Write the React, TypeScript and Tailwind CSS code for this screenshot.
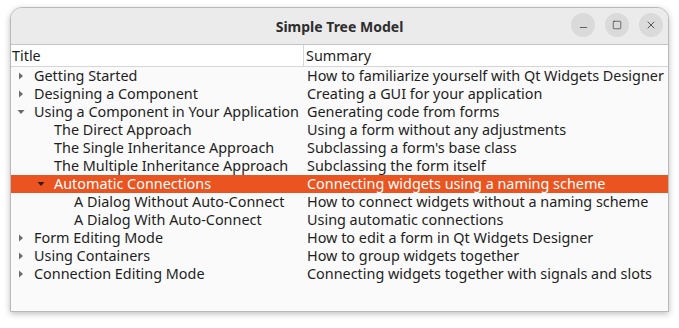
import { Minus, Square, X } from "lucide-react";

interface Row {
    title: string;
    summary: string;
    level: number;
    arrow: "none" | "closed" | "open";
    selected?: boolean;
}

const rows: Row[] = [
    { title: "Getting Started", summary: "How to familiarize yourself with Qt Widgets Designer", level: 0, arrow: "closed" },
    { title: "Designing a Component", summary: "Creating a GUI for your application", level: 0, arrow: "closed" },
    { title: "Using a Component in Your Application", summary: "Generating code from forms", level: 0, arrow: "open" },
    { title: "The Direct Approach", summary: "Using a form without any adjustments", level: 1, arrow: "none" },
    { title: "The Single Inheritance Approach", summary: "Subclassing a form's base class", level: 1, arrow: "none" },
    { title: "The Multiple Inheritance Approach", summary: "Subclassing the form itself", level: 1, arrow: "none" },
    { title: "Automatic Connections", summary: "Connecting widgets using a naming scheme", level: 1, arrow: "open", selected: true },
    { title: "A Dialog Without Auto-Connect", summary: "How to connect widgets without a naming scheme", level: 2, arrow: "none" },
    { title: "A Dialog With Auto-Connect", summary: "Using automatic connections", level: 2, arrow: "none" },
    { title: "Form Editing Mode", summary: "How to edit a form in Qt Widgets Designer", level: 0, arrow: "closed" },
    { title: "Using Containers", summary: "How to group widgets together", level: 0, arrow: "closed" },
    { title: "Connection Editing Mode", summary: "Connecting widgets together with signals and slots", level: 0, arrow: "closed" },
];

const indent = ["pl-[23px]", "pl-[43px]", "pl-[63px]"];
const arrowPos = ["w-[23px] pl-[6px]", "w-[43px] pl-[26px]", "w-[63px] pl-[46px]"];

function Arrow({ kind, selected }: { kind: Row["arrow"]; selected?: boolean }) {
    const fill = selected ? "#3a1a0c" : "#6b6b6b";
    if (kind === "closed") {
        return (
            <svg width="8" height="8" viewBox="0 0 8 8">
                <path d="M2 0.5 L6 4 L2 7.5 Z" fill={fill} />
            </svg>
        );
    }
    if (kind === "open") {
        return (
            <svg width="8" height="8" viewBox="0 0 8 8">
                <path d="M0.5 2 L7.5 2 L4 6 Z" fill={fill} />
            </svg>
        );
    }
    return null;
}

export default function App() {
    return (
        <div className="w-[679px] h-[328px] bg-white pt-[7px] px-[10px] font-['Noto_Sans',sans-serif]">
            <div className="w-[659px] h-[305px] flex flex-col rounded-t-[12px] border border-[#b9b9b9] shadow-[0_2px_6px_rgba(0,0,0,0.25)] overflow-hidden bg-[#fafafa]">
                {/* title bar */}
                <div className="h-[37px] shrink-0 bg-[#ebebeb] border-b border-[#c4c4c4] flex items-center relative">
                    <div className="flex-1 text-center text-[14px] font-bold text-[#2e2e2e]">
                        Simple Tree Model
                    </div>
                    <div className="absolute right-[5px] top-[5px] flex gap-[10px]">
                        <div className="w-[24px] h-[24px] rounded-full bg-[#dadada] flex items-center justify-center text-[#333]">
                            <Minus size={11} strokeWidth={1.6} className="mt-[5px]" />
                        </div>
                        <div className="w-[24px] h-[24px] rounded-full bg-[#dadada] flex items-center justify-center text-[#333]">
                            <Square size={10} strokeWidth={1.6} />
                        </div>
                        <div className="w-[24px] h-[24px] rounded-full bg-[#dadada] flex items-center justify-center text-[#333]">
                            <X size={12} strokeWidth={1.6} />
                        </div>
                    </div>
                </div>

                {/* header */}
                <div className="h-[22px] shrink-0 flex bg-white border-b border-[#d6d6d6] text-[14.4px] text-[#1e1e1e] leading-[22px]">
                    <div className="w-[293px] pl-[1px] border-r border-[#d6d6d6]">Title</div>
                    <div className="flex-1 pl-[2px]">Summary</div>
                </div>

                {/* rows */}
                <div className="flex flex-col text-[14.4px] leading-[18px]">
                    {rows.map((r) => (
                        <div
                            key={r.title}
                            className={
                                r.selected
                                    ? "h-[18px] flex bg-[#e95420] text-white"
                                    : "h-[18px] flex text-[#1e1e1e]"
                            }
                        >
                            <div className="w-[294px] flex items-center relative whitespace-nowrap">
                                <div className={"absolute left-0 top-0 h-[18px] flex items-center " + arrowPos[r.level]}>
                                    <Arrow kind={r.arrow} selected={r.selected} />
                                </div>
                                <span className={indent[r.level]}>{r.title}</span>
                            </div>
                            <div className="flex-1 pl-[2px] whitespace-nowrap">{r.summary}</div>
                        </div>
                    ))}
                </div>
            </div>
        </div>
    );
}
